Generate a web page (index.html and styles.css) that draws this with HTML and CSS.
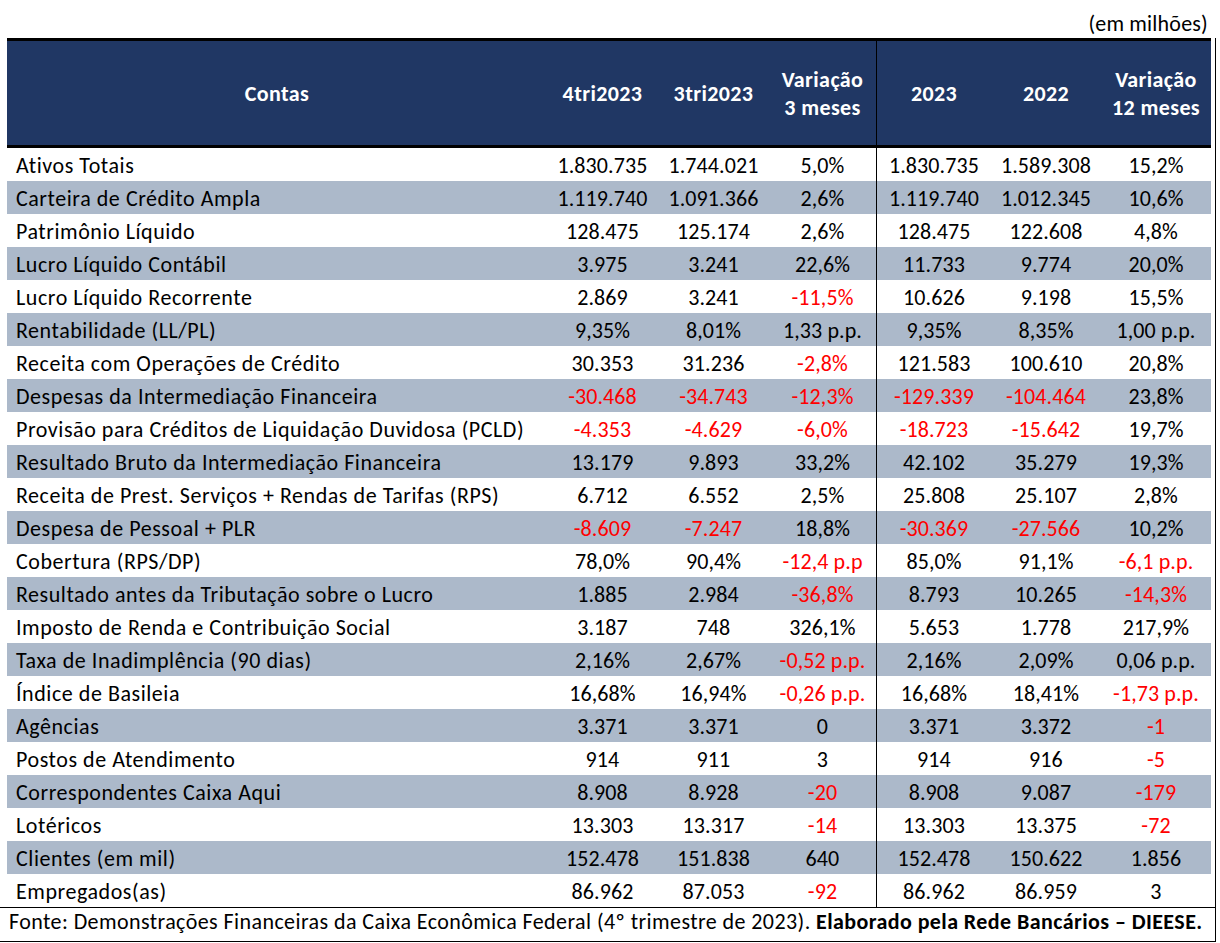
FILE: index.html
```html
<!DOCTYPE html>
<html lang="pt-BR">
<head>
<meta charset="utf-8">
<title>Caixa - Indicadores 4tri2023</title>
<link rel="stylesheet" href="styles.css">
</head>
<body>
<div class="page">
  <div class="unit">(em milhões)</div>
  <div class="frame">
    <div class="grid head">
      <div class="hc label-h">Contas</div>
      <div class="hc">4tri2023</div>
      <div class="hc">3tri2023</div>
      <div class="hc divider">Variação<br>3 meses</div>
      <div class="hc">2023</div>
      <div class="hc">2022</div>
      <div class="hc">Variação<br>12 meses</div>
    </div>
    <div class="rows">
      <div class="grid row"><div class="c label">Ativos Totais</div><div class="c">1.830.735</div><div class="c">1.744.021</div><div class="c divider">5,0%</div><div class="c">1.830.735</div><div class="c">1.589.308</div><div class="c">15,2%</div></div>
      <div class="grid row alt"><div class="c label">Carteira de Crédito Ampla</div><div class="c">1.119.740</div><div class="c">1.091.366</div><div class="c divider">2,6%</div><div class="c">1.119.740</div><div class="c">1.012.345</div><div class="c">10,6%</div></div>
      <div class="grid row"><div class="c label">Patrimônio Líquido</div><div class="c">128.475</div><div class="c">125.174</div><div class="c divider">2,6%</div><div class="c">128.475</div><div class="c">122.608</div><div class="c">4,8%</div></div>
      <div class="grid row alt"><div class="c label">Lucro Líquido Contábil</div><div class="c">3.975</div><div class="c">3.241</div><div class="c divider">22,6%</div><div class="c">11.733</div><div class="c">9.774</div><div class="c">20,0%</div></div>
      <div class="grid row"><div class="c label">Lucro Líquido Recorrente</div><div class="c">2.869</div><div class="c">3.241</div><div class="c divider neg">-11,5%</div><div class="c">10.626</div><div class="c">9.198</div><div class="c">15,5%</div></div>
      <div class="grid row alt"><div class="c label">Rentabilidade (LL/PL)</div><div class="c">9,35%</div><div class="c">8,01%</div><div class="c divider">1,33 p.p.</div><div class="c">9,35%</div><div class="c">8,35%</div><div class="c">1,00 p.p.</div></div>
      <div class="grid row"><div class="c label">Receita com Operações de Crédito</div><div class="c">30.353</div><div class="c">31.236</div><div class="c divider neg">-2,8%</div><div class="c">121.583</div><div class="c">100.610</div><div class="c">20,8%</div></div>
      <div class="grid row alt"><div class="c label">Despesas da Intermediação Financeira</div><div class="c neg">-30.468</div><div class="c neg">-34.743</div><div class="c divider neg">-12,3%</div><div class="c neg">-129.339</div><div class="c neg">-104.464</div><div class="c">23,8%</div></div>
      <div class="grid row"><div class="c label">Provisão para Créditos de Liquidação Duvidosa (PCLD)</div><div class="c neg">-4.353</div><div class="c neg">-4.629</div><div class="c divider neg">-6,0%</div><div class="c neg">-18.723</div><div class="c neg">-15.642</div><div class="c">19,7%</div></div>
      <div class="grid row alt"><div class="c label">Resultado Bruto da Intermediação Financeira</div><div class="c">13.179</div><div class="c">9.893</div><div class="c divider">33,2%</div><div class="c">42.102</div><div class="c">35.279</div><div class="c">19,3%</div></div>
      <div class="grid row"><div class="c label">Receita de Prest. Serviços + Rendas de Tarifas (RPS)</div><div class="c">6.712</div><div class="c">6.552</div><div class="c divider">2,5%</div><div class="c">25.808</div><div class="c">25.107</div><div class="c">2,8%</div></div>
      <div class="grid row alt"><div class="c label">Despesa de Pessoal + PLR</div><div class="c neg">-8.609</div><div class="c neg">-7.247</div><div class="c divider">18,8%</div><div class="c neg">-30.369</div><div class="c neg">-27.566</div><div class="c">10,2%</div></div>
      <div class="grid row"><div class="c label">Cobertura (RPS/DP)</div><div class="c">78,0%</div><div class="c">90,4%</div><div class="c divider neg">-12,4 p.p</div><div class="c">85,0%</div><div class="c">91,1%</div><div class="c neg">-6,1 p.p.</div></div>
      <div class="grid row alt"><div class="c label">Resultado antes da Tributação sobre o Lucro</div><div class="c">1.885</div><div class="c">2.984</div><div class="c divider neg">-36,8%</div><div class="c">8.793</div><div class="c">10.265</div><div class="c neg">-14,3%</div></div>
      <div class="grid row"><div class="c label">Imposto de Renda e Contribuição Social</div><div class="c">3.187</div><div class="c">748</div><div class="c divider">326,1%</div><div class="c">5.653</div><div class="c">1.778</div><div class="c">217,9%</div></div>
      <div class="grid row alt"><div class="c label">Taxa de Inadimplência (90 dias)</div><div class="c">2,16%</div><div class="c">2,67%</div><div class="c divider neg">-0,52 p.p.</div><div class="c">2,16%</div><div class="c">2,09%</div><div class="c">0,06 p.p.</div></div>
      <div class="grid row"><div class="c label">Índice de Basileia</div><div class="c">16,68%</div><div class="c">16,94%</div><div class="c divider neg">-0,26 p.p.</div><div class="c">16,68%</div><div class="c">18,41%</div><div class="c neg">-1,73 p.p.</div></div>
      <div class="grid row alt"><div class="c label">Agências</div><div class="c">3.371</div><div class="c">3.371</div><div class="c divider">0</div><div class="c">3.371</div><div class="c">3.372</div><div class="c neg">-1</div></div>
      <div class="grid row"><div class="c label">Postos de Atendimento</div><div class="c">914</div><div class="c">911</div><div class="c divider">3</div><div class="c">914</div><div class="c">916</div><div class="c neg">-5</div></div>
      <div class="grid row alt"><div class="c label">Correspondentes Caixa Aqui</div><div class="c">8.908</div><div class="c">8.928</div><div class="c divider neg">-20</div><div class="c">8.908</div><div class="c">9.087</div><div class="c neg">-179</div></div>
      <div class="grid row"><div class="c label">Lotéricos</div><div class="c">13.303</div><div class="c">13.317</div><div class="c divider neg">-14</div><div class="c">13.303</div><div class="c">13.375</div><div class="c neg">-72</div></div>
      <div class="grid row alt"><div class="c label">Clientes (em mil)</div><div class="c">152.478</div><div class="c">151.838</div><div class="c divider">640</div><div class="c">152.478</div><div class="c">150.622</div><div class="c">1.856</div></div>
      <div class="grid row"><div class="c label">Empregados(as)</div><div class="c">86.962</div><div class="c">87.053</div><div class="c divider neg">-92</div><div class="c">86.962</div><div class="c">86.959</div><div class="c">3</div></div>
    </div>
    <div class="footer">Fonte: Demonstrações Financeiras da Caixa Econômica Federal (4º trimestre de 2023). <b>Elaborado pela Rede Bancários – DIEESE.</b></div>
  </div>
</div>
</body>
</html>
```

FILE: styles.css
```css
* { box-sizing: border-box; }

html, body {
  margin: 0;
  padding: 0;
  background: #ffffff;
}

body {
  font-family: Carlito, Calibri, Lato, "Liberation Sans", sans-serif;
  font-size: 22px;
  color: #000000;
}

.page {
  width: 1220px;
  height: 943px;
  overflow: hidden;
}

.unit {
  height: 38px;
  padding-top: 10px;
  padding-right: 12px;
  line-height: 28px;
  text-align: right;
  letter-spacing: 0.2px;
}

.frame {
  width: 1216px;
  border-right: 1px solid #000000;
}

.grid {
  display: grid;
  grid-template-columns: 540px 111px 111px 108px 114px 110px 110px;
  width: 1204px;
  margin-left: 7px;
}

.head {
  height: 110px;
  background: #203764;
  border-top: 3px solid #000000;
  border-bottom: 3px solid #000000;
  color: #ffffff;
  font-weight: bold;
}

.hc {
  display: flex;
  align-items: center;
  justify-content: center;
  text-align: center;
  line-height: 28px;
  padding-top: 2px;
  letter-spacing: 0.4px;
}

.divider {
  border-right: 1px solid #000000;
}

.row {
  height: 33px;
  background: #ffffff;
}

.row.alt {
  background: #acb9ca;
}

.c {
  display: flex;
  align-items: center;
  justify-content: center;
  line-height: 33px;
  padding-top: 1px;
  white-space: nowrap;
  letter-spacing: 0.1px;
}

.c.label {
  justify-content: flex-start;
  padding-left: 9px;
  letter-spacing: 0.55px;
}

.neg {
  color: #ff0000;
}

.footer {
  height: 35px;
  border-top: 1px solid #000000;
  border-bottom: 1px solid #000000;
  padding-left: 9px;
  line-height: 28px;
  white-space: nowrap;
  letter-spacing: 0.42px;
}

.footer b {
  font-weight: bold;
}
```
